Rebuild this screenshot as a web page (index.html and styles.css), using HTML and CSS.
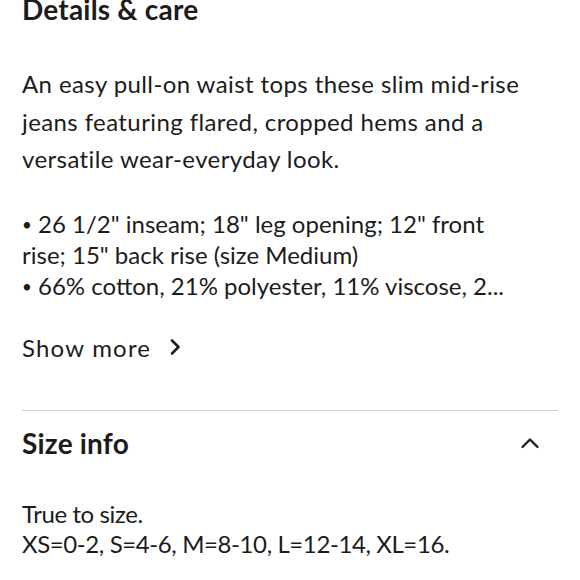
FILE: index.html
```html
<!DOCTYPE html>
<html>
<head>
<meta charset="utf-8">
<link rel="stylesheet" href="styles.css">
</head>
<body>
<main class="page">
  <section class="details">
    <h2 class="section-title">Details &amp; care</h2>
    <p class="desc">An easy pull-on waist tops these slim mid-rise jeans featuring flared, cropped hems and a versatile wear-everyday look.</p>
    <div class="bullets">
      <div><span class="dot">•</span> 26 1/2" inseam; 18" leg opening; 12" front rise; 15" back rise (size Medium)</div>
      <div><span class="dot">•</span> 66% cotton, 21% polyester, 11% viscose, 2...</div>
    </div>
    <a class="show-more">Show more
      <svg class="chev" width="12" height="18" viewBox="0 0 12 18"><path d="M3 2.5 L9.5 9 L3 15.5" fill="none" stroke="#1f1f1f" stroke-width="2.6" stroke-linecap="round" stroke-linejoin="round"/></svg>
    </a>
  </section>
  <hr class="divider">
  <section class="size">
    <div class="size-head">
      <h2 class="section-title">Size info</h2>
      <svg class="caret" width="20" height="12" viewBox="0 0 20 12"><path d="M2.5 10 L10 2.5 L17.5 10" fill="none" stroke="#1f1f1f" stroke-width="2.4" stroke-linecap="round" stroke-linejoin="round"/></svg>
    </div>
    <p class="size-text">True to size.<br>XS=0-2, S=4-6, M=8-10, L=12-14, XL=16.</p>
  </section>
</main>
</body>
</html>
```
FILE: styles.css
```css
html, body {
  margin: 0;
  padding: 0;
  background: #ffffff;
}
body {
  font-family: Lato, "Open Sans", sans-serif;
  color: #1c1c1c;
  width: 580px;
  height: 580px;
  overflow: hidden;
}
.page {
  padding: 0 22px;
  margin-top: -5px;
}
.section-title {
  margin: 0;
  font-size: 28px;
  font-weight: 700;
  line-height: 28px;
  letter-spacing: 0.2px;
}
.desc {
  margin: 42px 0 0;
  font-size: 24px;
  line-height: 37.5px;
  letter-spacing: 0.4px;
}
.bullets {
  margin-top: 30px;
  font-size: 24px;
  line-height: 31px;
  max-width: 490px;
}
.dot {
  font-size: 17px;
  line-height: 0;
  vertical-align: 2px;
}
.show-more {
  display: flex;
  align-items: center;
  gap: 18px;
  margin-top: 31px;
  font-size: 24px;
  line-height: 31px;
  letter-spacing: 1.2px;
}
.chev {
  display: block;
}
.divider {
  margin: 47px 0 0;
  border: 0;
  border-top: 1.5px solid #cfcfcf;
  height: 0;
}
.size-head {
  display: flex;
  align-items: center;
  justify-content: space-between;
  margin-top: 18px;
  padding-right: 18px;
}
.caret {
  display: block;
}
.size-text {
  margin: 42px 0 0;
  font-size: 24px;
  line-height: 30px;
  letter-spacing: -0.4px;
}
```
